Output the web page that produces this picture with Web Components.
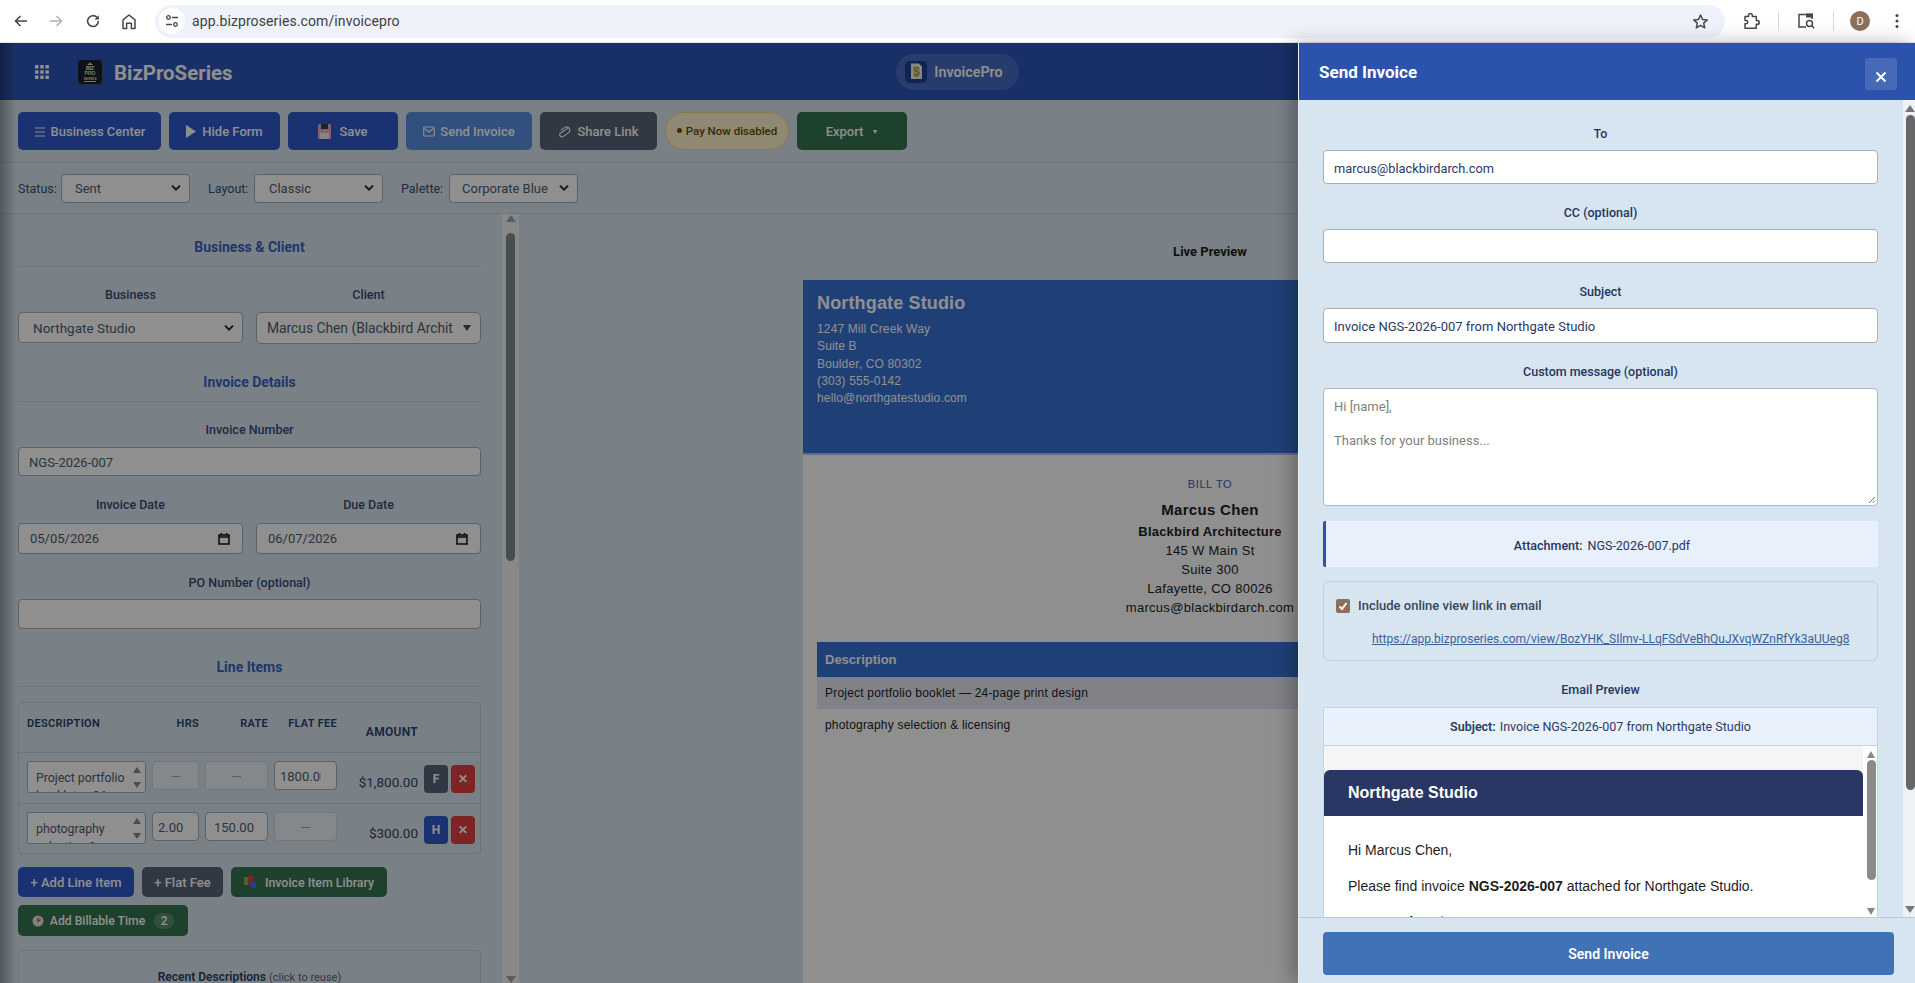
<!DOCTYPE html>
<html lang="en"><head><meta charset="utf-8"><title>InvoicePro</title>
<style>
html,body{margin:0;padding:0;width:1915px;height:983px;overflow:hidden;background:#d8e6f1;font-family:Roboto,"Open Sans",sans-serif}
</style></head><body>
<invoice-app></invoice-app>
<script>
function def(name, css, html){
  customElements.define(name, class extends HTMLElement{
    constructor(){super();const r=this.attachShadow({mode:'open'});
      r.innerHTML='<style>'+css+'</style>'+html;}
  });
}
const chev='<svg width="12" height="8" viewBox="0 0 12 8"><path d="M2 1.600 6 5.600l4-4" fill="none" stroke="currentColor" stroke-width="2"/></svg>';

def('chrome-bar',`:host{display:flex;align-items:center;height:43px;background:#fff;box-sizing:border-box;border-bottom:1px solid #e3e7ee;color:#474747;font:14px Roboto,sans-serif}
svg{flex:none;display:block}.ib{flex:none;width:20px;height:20px;display:flex;align-items:center;justify-content:center}
.pill{flex:none;width:1570px;height:33px;margin-left:16px;border-radius:17px;background:#eff2fa;display:flex;align-items:center;position:relative;box-sizing:border-box}
.tune{width:26px;height:26px;border-radius:50%;background:#fff;margin-left:4px;display:flex;align-items:center;justify-content:center}
.url{margin-left:7px;color:#3c4043;font-size:14px;letter-spacing:.1px}.star{margin-left:auto;margin-right:16px}
.sep{flex:none;width:1px;height:20px;background:#d3dbe6}
.av{flex:none;width:20px;height:20px;border-radius:50%;background:#8d6e5d;color:#fff;font-size:11px;display:flex;align-items:center;justify-content:center}`,
`<span class="ib" style="margin-left:11px"><svg width="16" height="16" viewBox="0 0 16 16"><path d="M14 8H2.500M7.500 3 2.500 8l5 5" fill="none" stroke="#474747" stroke-width="1.600"/></svg></span>
<span class="ib" style="margin-left:15px"><svg width="16" height="16" viewBox="0 0 16 16"><path d="M2 8h11.500M8.500 3l5 5-5 5" fill="none" stroke="#b0b3b8" stroke-width="1.600"/></svg></span>
<span class="ib" style="margin-left:17px"><svg width="16" height="16" viewBox="0 0 16 16"><path d="M13.400 8a5.400 5.400 0 1 1-1.600-3.800L13.500 6" fill="none" stroke="#474747" stroke-width="1.600"/><path d="M13.800 2.200v4.300H9.500z" fill="#474747"/></svg></span>
<span class="ib" style="margin-left:16px"><svg width="16" height="17" viewBox="0 0 16 17"><path d="M2 15.500V6.800L8 2l6 4.800v8.700h-3.600v-5.300H5.600v5.300z" fill="none" stroke="#474747" stroke-width="1.500" stroke-linejoin="round"/></svg></span>
<div class="pill"><span class="tune"><svg width="14" height="14" viewBox="0 0 14 14"><g fill="none" stroke="#474747" stroke-width="1.300"><circle cx="3.500" cy="3.500" r="1.800"/><path d="M7 3.500h6M1 10.500h6"/><circle cx="10.500" cy="10.500" r="1.800"/></g></svg></span>
<span class="url">app.bizproseries.com/invoicepro</span>
<span class="star"><svg width="17" height="17" viewBox="0 0 17 17"><path d="m8.500 2 2 4.400 4.800.5-3.600 3.200 1 4.700-4.200-2.400-4.200 2.400 1-4.700L1.700 6.900l4.800-.5z" fill="none" stroke="#474747" stroke-width="1.500" stroke-linejoin="round"/></svg></span></div>
<span class="ib" style="margin-left:16px"><svg width="18" height="18" viewBox="0 0 18 18"><path d="M3 4.500h3.500V3.400a1.900 1.900 0 0 1 3.800 0v1.100h4v4h1a1.900 1.900 0 0 1 0 3.800h-1v4H3v-4.600h1.200a1.600 1.600 0 0 0 0-3.200H3z" fill="none" stroke="#474747" stroke-width="1.500" stroke-linejoin="round"/></svg></span>
<span class="sep" style="margin-left:17px"></span>
<span class="ib" style="margin-left:17px"><svg width="19" height="18" viewBox="0 0 19 18"><path d="M9 15H2V2.500h13V7" fill="none" stroke="#474747" stroke-width="1.500"/><rect x="9" y="1.500" width="7" height="4" fill="#474747"/><circle cx="12.500" cy="11.500" r="3" fill="none" stroke="#474747" stroke-width="1.500"/><path d="m14.700 13.700 2.500 2.500" stroke="#474747" stroke-width="1.500"/></svg></span>
<span class="sep" style="margin-left:17px"></span>
<span class="av" style="margin-left:16px">D</span>
<span class="ib" style="margin-left:17px"><svg width="4" height="16" viewBox="0 0 4 16"><circle cx="2" cy="2.500" r="1.500" fill="#474747"/><circle cx="2" cy="8" r="1.500" fill="#474747"/><circle cx="2" cy="13.500" r="1.500" fill="#474747"/></svg></span>`);

def('app-header',`:host{display:grid;grid-template-columns:1fr auto 1fr;align-items:center;height:57px;background:#2e55b8;color:#fff;font-family:Roboto,sans-serif}
.l{display:flex;align-items:center;padding-left:35px}.name{margin-left:11px;font-size:20.400px;font-weight:700;padding-top:2px}
.pill{display:flex;align-items:center;height:36px;padding:0 16px 0 9px;border-radius:18px;background:rgba(255,255,255,.12);font-size:14.300px;font-weight:600;gap:7px}.pill span{padding-top:1px}svg{display:block;flex:none}
text{font-family:"Liberation Sans",sans-serif}`,
`<div class="l"><svg width="14" height="14" viewBox="0 0 14 14" fill="#fff"><g><rect x="0" y="0" width="3.500" height="3.500" rx=".6"/><rect x="5.200" y="0" width="3.500" height="3.500" rx=".6"/><rect x="10.400" y="0" width="3.500" height="3.500" rx=".6"/><rect x="0" y="5.200" width="3.500" height="3.500" rx=".6"/><rect x="5.200" y="5.200" width="3.500" height="3.500" rx=".6"/><rect x="10.400" y="5.200" width="3.500" height="3.500" rx=".6"/><rect x="0" y="10.400" width="3.500" height="3.500" rx=".6"/><rect x="5.200" y="10.400" width="3.500" height="3.500" rx=".6"/><rect x="10.400" y="10.400" width="3.500" height="3.500" rx=".6"/></g></svg>
<svg style="margin-left:28px" width="26" height="26" viewBox="0 0 26 26"><rect width="26" height="26" rx="5" fill="#16202e"/><rect x=".5" y=".5" width="25" height="25" rx="5" fill="none" stroke="#4a5a70"/><path d="M10 6l3-2.500L16 6z" fill="#e8d58c"/><rect x="7" y="22" width="12" height="1" fill="#e8d58c"/><text x="13" y="11" font-size="5" font-weight="700" fill="#fff" text-anchor="middle">BIZ</text><text x="13" y="16" font-size="5" font-weight="700" fill="#e8d58c" text-anchor="middle">PRO</text><text x="13" y="20.500" font-size="3.600" font-weight="700" fill="#e8d58c" text-anchor="middle">SERIES</text></svg>
<span class="name">BizProSeries</span></div>
<div class="pill"><svg width="22" height="22" viewBox="0 0 22 22"><rect width="22" height="22" rx="5" fill="#1f3f90"/><path d="M6 2.500h8l3 3V18H6z" fill="#f1f2ea"/><path d="M8 6h6M8 9h7M8 12h7M8 15h6" stroke="#b4b8a8" stroke-width=".8"/><text x="11.500" y="15" font-size="12" font-weight="700" fill="#b49a22" text-anchor="middle">$</text></svg><span>InvoicePro</span></div><div></div>`);

def('app-btn',`:host{display:inline-flex;align-items:center;justify-content:center;gap:5px;box-sizing:border-box;height:38px;padding-top:var(--pt,2px);border-radius:5px;background:var(--c,#2f59cc);color:#fff;font:500 var(--fs,13px) Roboto,sans-serif;white-space:nowrap;flex:none}`,`<slot></slot>`);

def('tool-bar',`:host{display:flex;gap:8px;align-items:center;height:63px;box-sizing:border-box;padding:0 0 1px 18px;border-bottom:1px solid #c3d0dc}svg{display:block;flex:none}
.pay{flex:none;width:124px;height:38px;box-sizing:border-box;border-radius:19px;background:#fff3cd;border:1.500px solid #f3d98a;color:#664d03;font:500 11.500px Roboto,sans-serif;display:flex;align-items:center;justify-content:center;gap:4px}
.d{width:5px;height:5px;border-radius:50%;background:#664d03}.tri{font-size:7px;margin-left:3px}`,
`<app-btn style="width:143px"><svg width="12" height="12" viewBox="0 0 12 12"><path d="M1 2h10M1 6h10M1 10h10" stroke="#fff" stroke-width="1"/></svg>Business Center</app-btn>
<app-btn style="width:111px"><svg width="11" height="13" viewBox="0 0 11 13"><path d="M0 0l10 6.500L0 13z" fill="#fff"/></svg>Hide Form</app-btn>
<app-btn style="width:110px;gap:8px"><svg width="13" height="15" viewBox="0 0 13 15"><rect y="0" width="13" height="15" rx="1.500" fill="#e9a9c7"/><rect x="3" y="0" width="7" height="5" fill="#333a4a"/><rect x="2" y="9" width="9" height="6" fill="#f6e9ef"/></svg>Save</app-btn>
<app-btn style="width:126px;--c:#5a8fe0"><svg width="12" height="11" viewBox="0 0 12 11"><rect x=".7" y="1" width="10.600" height="9" rx="1" fill="none" stroke="#fff" stroke-width="1.100"/><path d="m1.500 2.500 4.500 3.500 4.500-3.500" fill="none" stroke="#fff" stroke-width="1.100"/></svg>Send Invoice</app-btn>
<app-btn style="width:117px;--c:#5a6478;gap:6px"><svg width="13" height="14" viewBox="0 0 13 14"><path d="M9.500 2.200 2.800 8.500a2.200 2.200 0 0 0 3 3.200l5.200-5.200a3.300 3.300 0 0 0-4.500-4.500L2.500 6" fill="none" stroke="#fff" stroke-width="1.100" transform="rotate(10 6 7)"/></svg>Share Link</app-btn>
<div class="pay"><span class="d"></span><span>Pay Now disabled</span></div>
<app-btn style="width:110px;--c:#34744f">Export<span class="tri">▼</span></app-btn>`);

def('select-box',`:host{display:flex;align-items:center;justify-content:space-between;box-sizing:border-box;height:var(--h,29px);padding:0 7px 0 var(--p,14px);background:#fff;border:1px solid #a4afba;border-radius:4px;color:#4d5d70;font:var(--f,400 13px Roboto,sans-serif);overflow:hidden;white-space:nowrap}
svg{display:block;flex:none}.c{color:#1f2a38;display:flex}`,`<span><slot></slot></span><span class="c">${chev}</span>`);

def('filter-bar',`:host{display:flex;align-items:center;height:51px;box-sizing:border-box;padding-left:18px;border-bottom:1px solid #c3d0dc;color:#3a4c6a;font:400 12.500px Roboto,sans-serif}
select-box{margin-left:6px;width:129px}span{white-space:nowrap}span+select-box+span{margin-left:18px}`,
`<span style="width:37px">Status:</span><select-box style="--p:13px">Sent</select-box><span style="width:40px">Layout:</span><select-box>Classic</select-box><span style="width:42px">Palette:</span><select-box style="--p:12px">Corporate Blue</select-box>`);

def('section-title',`:host{display:flex;align-items:flex-end;justify-content:center;height:var(--h,58px);box-sizing:border-box;padding-bottom:10px;margin-right:-4px;padding-right:4px;border-bottom:1px solid #c5d2de;color:#3762c0;font:700 14px/18px Roboto,sans-serif}`,`<slot></slot>`);

def('form-field',`:host{display:block;min-width:0}.l{display:block;text-align:center;color:var(--lc,#344b73);font:500 12.500px/18px Roboto,sans-serif;margin-bottom:var(--g,8px)}`,`<span class="l"><slot name="label"></slot></span><slot></slot>`);

def('text-box',`:host{display:flex;align-items:center;justify-content:space-between;box-sizing:border-box;height:var(--h,29px);padding:var(--pt,1px) var(--pr,10px) 0 var(--p,10px);background:#fff;border:1px solid #a4afba;border-radius:4px;color:var(--tc,#4d5d70);font:400 var(--fs,13px) Roboto,sans-serif;white-space:nowrap;overflow:hidden}svg{display:block;flex:none}`,`<span><slot></slot></span><slot name="end"></slot>`);

def('scroll-rail',`:host{display:flex;flex-direction:column;align-items:center;flex:none;box-sizing:border-box;background:var(--bg,#f0f0f0);width:var(--w,17px);height:100%;padding:var(--pad,0)}
.u,.d{width:0;height:0;border-left:var(--a,5.500px) solid transparent;border-right:var(--a,5.500px) solid transparent;flex:none}
.u{border-bottom:7px solid var(--ac,#555);margin-top:var(--um,3px)}.d{border-top:7px solid var(--ac,#555);margin-top:auto;margin-bottom:var(--dm,1px)}
.t{flex:none;width:var(--tw,9px);height:var(--th,300px);margin-top:var(--tm,4px);background:var(--tc,#858f96);border-radius:5px}`,
`<div class="u"></div><div class="t"></div><div class="d"></div>`);

def('fake-area',`:host{display:flex;box-sizing:border-box;height:32px;width:119px;background:#fff;border:1px solid #a4afba;border-radius:3px;overflow:hidden;color:#4d5d70;font:400 12.300px/18px Roboto,sans-serif}
.t{flex:1;min-width:0;padding:6.500px 0 0 8px;box-sizing:border-box}.s{flex:none;width:16px;display:flex;flex-direction:column;align-items:center;justify-content:space-between;padding:5px 0 4px;box-sizing:border-box}
.s i{width:0;height:0;border-left:4.500px solid transparent;border-right:4.500px solid transparent}.s i:first-child{border-bottom:6px solid #888}.s i:last-child{border-top:6px solid #888}`,
`<div class="t"><slot></slot></div><div class="s"><i></i><i></i></div>`);

def('square-btn',`:host{display:flex;align-items:center;justify-content:center;width:24px;height:28px;border-radius:4px;background:var(--c);color:#fff;font:700 12px Roboto,sans-serif}`,`<slot></slot>`);

def('line-row',`:host{display:grid;grid-template-columns:119px 47px 63px 63px 75px 51px;column-gap:6px;align-items:start;height:51px;box-sizing:border-box;padding:8px 0 0 8px;border-top:1px solid #c3d0dc;color:#4d5d70;font:400 13px Roboto,sans-serif}`,
`<slot></slot>`);

def('client-select',`:host{display:flex;align-items:center;justify-content:space-between;box-sizing:border-box;height:32px;padding:0 9px 0 10px;background:#fff;border:1px solid #a4afba;border-radius:5px;color:#4d5d70;font:400 13.800px Roboto,sans-serif;white-space:nowrap;overflow:hidden}i{width:0;height:0;border-left:4px solid transparent;border-right:4px solid transparent;border-top:6px solid #3f4f63}`,`<span><slot></slot></span><i></i>`);

def('form-panel',`:host{display:flex;flex:none;width:520px;height:100%;overflow:hidden;font-family:Roboto,sans-serif}
.c{flex:none;width:463px;margin:0 21px 0 18px;height:100%;overflow:hidden}
.two{display:grid;grid-template-columns:225px 225px;column-gap:13px}
.tb{margin-top:15px;height:152px;box-sizing:border-box;border:1px solid #c3d0dc;border-radius:3px}
.hd{display:grid;grid-template-columns:119px 47px 63px 63px 75px 51px;column-gap:6px;height:49px;padding:12px 0 0 8px;box-sizing:border-box;color:#2c4166;font:600 11px/18px Roboto,sans-serif;letter-spacing:.3px}
.hd span{text-align:right}.hd span:first-child{text-align:left}
.dis{background:#eef3f8!important;border-color:#ccd7e0!important;color:#9aa5b0}
.amt{text-align:right;margin-top:12px;line-height:18px;color:#33425a;font-size:13.500px}.acts{display:flex;gap:3px;margin-top:4px}
.clip{display:block;width:41px;overflow:hidden}
.btns{display:flex;flex-wrap:wrap;gap:8px;margin-top:13px;width:430px}
.btns app-btn{height:30px;--pt:0px}
.badge{display:inline-flex;width:20px;height:16px;border-radius:8px;background:rgba(255,255,255,.18);align-items:center;justify-content:center;font-size:12px;margin-left:3px}
svg{display:block;flex:none}
.rec{margin-top:14px;height:60px;border:1px solid #c3d0dc;border-bottom:0;border-radius:3px;box-sizing:border-box;text-align:center;padding-top:18px;color:#2c4166;font:600 12px/17px Roboto,sans-serif}.rec small{font-weight:400;font-size:11px;color:#55667f}`,
`<div class="c">
<section-title style="--h:53px">Business &amp; Client</section-title>
<div class="two" style="margin-top:19px"><form-field><span slot="label">Business</span><select-box style="--h:31px;--p:14px;--f:400 13.500px Roboto,sans-serif">Northgate Studio</select-box></form-field>
<form-field><span slot="label">Client</span><client-select>Marcus Chen (Blackbird Archit</client-select></form-field></div>
<section-title>Invoice Details</section-title>
<form-field style="margin-top:19px"><span slot="label">Invoice Number</span><text-box>NGS-2026-007</text-box></form-field>
<div class="two" style="margin-top:20px"><form-field style="--g:9px"><span slot="label">Invoice Date</span><text-box style="--h:31px;--p:11px;--pr:12px;--pt:0px">05/05/2026<svg slot="end" width="12" height="13" viewBox="0 0 12 13"><path d="M1 3h10v9H1zM1 5h10M3.500 1v2M8.500 1v2" fill="none" stroke="#111" stroke-width="1.500"/></svg></text-box></form-field>
<form-field style="--g:9px"><span slot="label">Due Date</span><text-box style="--h:31px;--p:11px;--pr:12px;--pt:0px">06/07/2026<svg slot="end" width="12" height="13" viewBox="0 0 12 13"><path d="M1 3h10v9H1zM1 5h10M3.500 1v2M8.500 1v2" fill="none" stroke="#111" stroke-width="1.500"/></svg></text-box></form-field></div>
<form-field style="margin-top:20px;--g:7px"><span slot="label">PO Number (optional)</span><text-box style="--h:30px"></text-box></form-field>
<section-title>Line Items</section-title>
<div class="tb"><div class="hd"><span>DESCRIPTION</span><span>HRS</span><span>RATE</span><span>FLAT FEE</span><span style="margin-top:8px;font-size:12px">AMOUNT</span></div>
<line-row><fake-area>Project portfolio booklet — 24-page print design</fake-area><text-box class="dis" style="--p:0px;--pr:0px;justify-content:center">—</text-box><text-box class="dis" style="--p:0px;--pr:0px;justify-content:center">—</text-box><text-box style="--p:5px;--pr:0px"><span class="clip">1800.00</span></text-box><div class="amt">$1,800.00</div><div class="acts"><square-btn style="--c:#5a6478">F</square-btn><square-btn style="--c:#e04040">✕</square-btn></div></line-row>
<line-row><fake-area>photography selection &amp; licensing</fake-area><text-box style="--p:5px">2.00</text-box><text-box style="--p:8px">150.00</text-box><text-box class="dis" style="--p:0px;--pr:0px;justify-content:center">—</text-box><div class="amt">$300.00</div><div class="acts"><square-btn style="--c:#2f59cc">H</square-btn><square-btn style="--c:#e04040">✕</square-btn></div></line-row></div>
<div class="btns"><app-btn style="width:116px">+ Add Line Item</app-btn><app-btn style="width:81px;--c:#5a6478">+ Flat Fee</app-btn>
<app-btn style="width:156px;--c:#34744f;gap:8px;--fs:12.400px"><svg width="13" height="12" viewBox="0 0 13 12"><rect x="0" y="1" width="5" height="8" fill="#7fbf3f"/><rect x="4" y="0" width="5" height="9" fill="#d04444"/><rect x="6" y="5" width="6" height="7" fill="#4a6fd0"/></svg>Invoice Item Library</app-btn>
<app-btn style="width:170px;height:31px;--c:#34744f;gap:6px;--fs:12.200px"><svg width="12" height="12" viewBox="0 0 12 12"><circle cx="6" cy="6" r="5.500" fill="#e9e3dc"/><path d="M6 3v3.500l2.500-2" stroke="#a85b4c" stroke-width="1.300" fill="none"/></svg>Add Billable Time<span class="badge">2</span></app-btn></div>
<div class="rec">Recent Descriptions <small>(click to reuse)</small></div>
</div>
<scroll-rail style="--bg:#eff3f6;--tm:11px;--th:328px;--tc:#80898f;--um:1px;--dm:0px;--ac:#a0a4a8"></scroll-rail>`);

def('invoice-paper',`:host{display:block;flex:none;width:814px;margin-top:20px;background:#fff;font-family:"Liberation Sans",Arial,sans-serif;color:#1d1d1d;flex:1}
.h{height:175px;box-sizing:border-box;padding:13px 14px;background:#3872d4;color:#fff;border-bottom:2px solid #b5c3e0}.n{font:700 18px/20px "Liberation Sans",sans-serif;letter-spacing:.15px}
.a{margin-top:8px;font-size:12px;line-height:17.300px;letter-spacing:.15px}
.b{text-align:center;padding-top:22px;font-size:13px;line-height:19px;letter-spacing:.3px}.bt{font-size:11px;line-height:14px;color:#3f63ad;letter-spacing:.6px}
.m{font-weight:700;font-size:15px;margin-top:9px;letter-spacing:.3px}.o{font-weight:700;margin-top:3px;letter-spacing:.2px}
table{width:786px;margin:25px 14px 0;border-collapse:collapse;font-size:12px}th{background:#3872d4;color:#fff;height:35px;text-align:left;padding:0 8px;font-size:13px}td{height:32px;padding:0 8px;letter-spacing:.2px}tr.alt td{background:#e4e8f2}`,
`<div class="h"><div class="n">Northgate Studio</div><div class="a">1247 Mill Creek Way<br>Suite B<br>Boulder, CO 80302<br>(303) 555-0142<br>hello@northgatestudio.com</div></div>
<div class="b"><div class="bt">BILL TO</div><div class="m">Marcus Chen</div><div class="o">Blackbird Architecture</div><div>145 W Main St</div><div>Suite 300</div><div>Lafayette, CO 80026</div><div>marcus@blackbirdarch.com</div></div>
<table><tr><th>Description</th></tr><tr class="alt"><td>Project portfolio booklet — 24-page print design</td></tr><tr><td>photography selection &amp; licensing</td></tr></table>`);

def('preview-pane',`:host{display:flex;flex-direction:column;align-items:center;flex:1;min-width:0;height:100%;overflow:hidden;box-sizing:border-box;padding:28px 15px 0 0}
.t{font:700 13px/18px Roboto,sans-serif;color:#1b1b1b;height:18px;box-sizing:border-box;padding-top:1px}`,`<div class="t">Live Preview</div><invoice-paper></invoice-paper>`);

def('email-preview',`:host{display:block;border:1px solid #bfd3ea;border-bottom:0;border-radius:4px 4px 0 0;background:#fff;height:220px;overflow:hidden;font-family:Roboto,sans-serif}
.s{height:38px;box-sizing:border-box;border-bottom:1px solid #bfd3ea;background:#e8f1fc;display:flex;align-items:center;justify-content:center;font:400 12.500px Roboto,sans-serif;color:#2a3a66;gap:4px}.s b{font-weight:600}
.w{display:flex;height:172px}.f{flex:none;width:539px;background:#f4f5f7;padding-top:24px;box-sizing:border-box;font-family:"Liberation Sans",Arial,sans-serif;overflow:hidden}
.eh{height:46px;background:#283764;border-radius:6px 6px 0 0;color:#fff;font:700 16px/46px "Liberation Sans",sans-serif;padding-left:24px}
.eb{background:#fff;height:200px;padding:24px;box-sizing:border-box;color:#1e1e1e;font-size:14px;line-height:20px}.eb p{margin:0 0 16px}
.g{flex:1;min-width:0}`,
`<div class="s"><b>Subject:</b><span>Invoice NGS-2026-007 from Northgate Studio</span></div>
<div class="w"><div class="f"><div class="eh">Northgate Studio</div><div class="eb"><p>Hi Marcus Chen,</p><p>Please find invoice <b>NGS-2026-007</b> attached for Northgate Studio.</p><p><b>Amount due:</b> $2,100.00</p></div></div><div class="g"></div><scroll-rail style="--w:12px;--bg:#fff;--tw:9px;--th:120px;--tc:#8a8a8a;--um:5px;--tm:2px;--dm:3px;--ac:#888;--a:4.500px"></scroll-rail></div>`);

def('send-drawer',`:host{position:absolute;top:43px;left:1298px;width:617px;bottom:0;box-sizing:border-box;display:flex;flex-direction:column;background:#d7e5f0;border-left:1px solid #e6eef7;box-shadow:-6px 0 18px rgba(0,0,0,.28);font-family:Roboto,sans-serif;color:#26355f}
.hd{flex:none;height:57px;background:#2b53ae;color:#fff;display:flex;align-items:center;justify-content:space-between;padding:0 18px 0 20px;font:700 17px Roboto,sans-serif}
.x{width:32px;height:32px;border-radius:3px;background:rgba(255,255,255,.13);display:flex;align-items:center;justify-content:center;margin-top:4px}.x svg{display:block;margin-top:6px}
.m{flex:1;min-height:0;display:flex;overflow:hidden}
.c{flex:none;width:555px;margin:0 25px 0 24px;padding-top:25px;--g:7px;--lc:#26355f;--tc:#2a3a66}
form-field{margin-bottom:20px}
.ta{height:118px;background:#fff;border:1px solid #a9bacb;border-radius:4px;box-sizing:border-box;padding:9px 10px;color:#808080;font:400 13px/17px Roboto,sans-serif;position:relative}
.grip{position:absolute;right:1px;bottom:1px}
.att{height:46px;margin-top:15px;background:#e7f0fb;border-left:3px solid #2b53ae;border-radius:2px;box-sizing:border-box;display:flex;align-items:center;justify-content:center;gap:5px;font-size:12.500px;padding-top:2px}.att b{font-weight:500}
.inc{height:80px;margin-top:14px;box-sizing:border-box;border:1px solid #bfd0df;border-radius:6px;padding:15px 0 0 12px;color:#38465a;font:500 13px/18px Roboto,sans-serif}
.row{display:flex;align-items:center;gap:8px}.cb{flex:none;width:14px;height:14px;border-radius:2px;background:#8d6e5d;display:flex;align-items:center;justify-content:center}
.lnk{display:block;margin:15px 0 0 36px;color:#3c6199;text-decoration:underline;font:400 12px/18px Roboto,sans-serif;white-space:nowrap}
.ft{flex:none;height:66px;box-sizing:border-box;border-top:1px solid #bccbdb;padding:14px 21px 8px 24px}
.send{height:43px;background:#4272b6;border-radius:4px;color:#fff;display:flex;align-items:center;justify-content:center;font:600 14px Roboto,sans-serif}`,
`<div class="hd"><span>Send Invoice</span><span class="x"><svg width="12" height="12" viewBox="0 0 12 12"><path d="m1.500 1.500 9 9m0-9-9 9" stroke="#fff" stroke-width="2"/></svg></span></div>
<div class="m"><div class="c">
<form-field><span slot="label">To</span><text-box style="--h:34px;--fs:12.800px;--pt:2px">marcus@blackbirdarch.com</text-box></form-field>
<form-field><span slot="label">CC (optional)</span><text-box style="--h:34px"></text-box></form-field>
<form-field><span slot="label">Subject</span><text-box style="--h:35px">Invoice NGS-2026-007 from Northgate Studio</text-box></form-field>
<form-field style="margin-bottom:0"><span slot="label">Custom message (optional)</span><div class="ta">Hi [name],<br><br>Thanks for your business...<svg class="grip" width="9" height="9" viewBox="0 0 9 9"><path d="M8 2 2 8M8 5.500 5.500 8" stroke="#777" stroke-width="1"/></svg></div></form-field>
<div class="att"><b>Attachment:</b><span>NGS-2026-007.pdf</span></div>
<div class="inc"><div class="row"><span class="cb"><svg width="10" height="10" viewBox="0 0 10 10"><path d="m1.500 5.500 2.500 2.500 4.500-6" fill="none" stroke="#fff" stroke-width="2"/></svg></span><span>Include online view link in email</span></div><span class="lnk">https://app.bizproseries.com/view/BozYHK_SIlmv-LLqFSdVeBhQuJXvqWZnRfYk3aUUeg8</span></div>
<form-field style="margin:20px 0 0;--g:8px"><span slot="label">Email Preview</span><email-preview></email-preview></form-field>
</div><scroll-rail style="--w:12px;--bg:#eef2f6;--pad:0 0 0 2px;--tw:9px;--th:675px;--tc:#666;--um:5px;--tm:3px;--dm:4px;--ac:#777"></scroll-rail></div>
<div class="ft"><div class="send">Send Invoice</div></div>`);

def('invoice-app',`:host{display:flex;flex-direction:column;position:relative;width:1915px;height:983px;overflow:hidden;background:#d8e6f1;font-family:Roboto,sans-serif}
.main{flex:1;min-height:0;display:flex}
.ov{position:absolute;left:0;right:0;top:43px;bottom:0;background:rgba(0,0,0,.44)}
.ov i{display:block;width:16px;height:100%;background:linear-gradient(90deg,rgba(0,0,0,.32),rgba(0,0,0,0))}`,
`<chrome-bar></chrome-bar><app-header></app-header><tool-bar></tool-bar><filter-bar></filter-bar>
<div class="main"><form-panel></form-panel><preview-pane></preview-pane></div>
<div class="ov"><i></i></div><send-drawer></send-drawer>`);
</script></body></html>
